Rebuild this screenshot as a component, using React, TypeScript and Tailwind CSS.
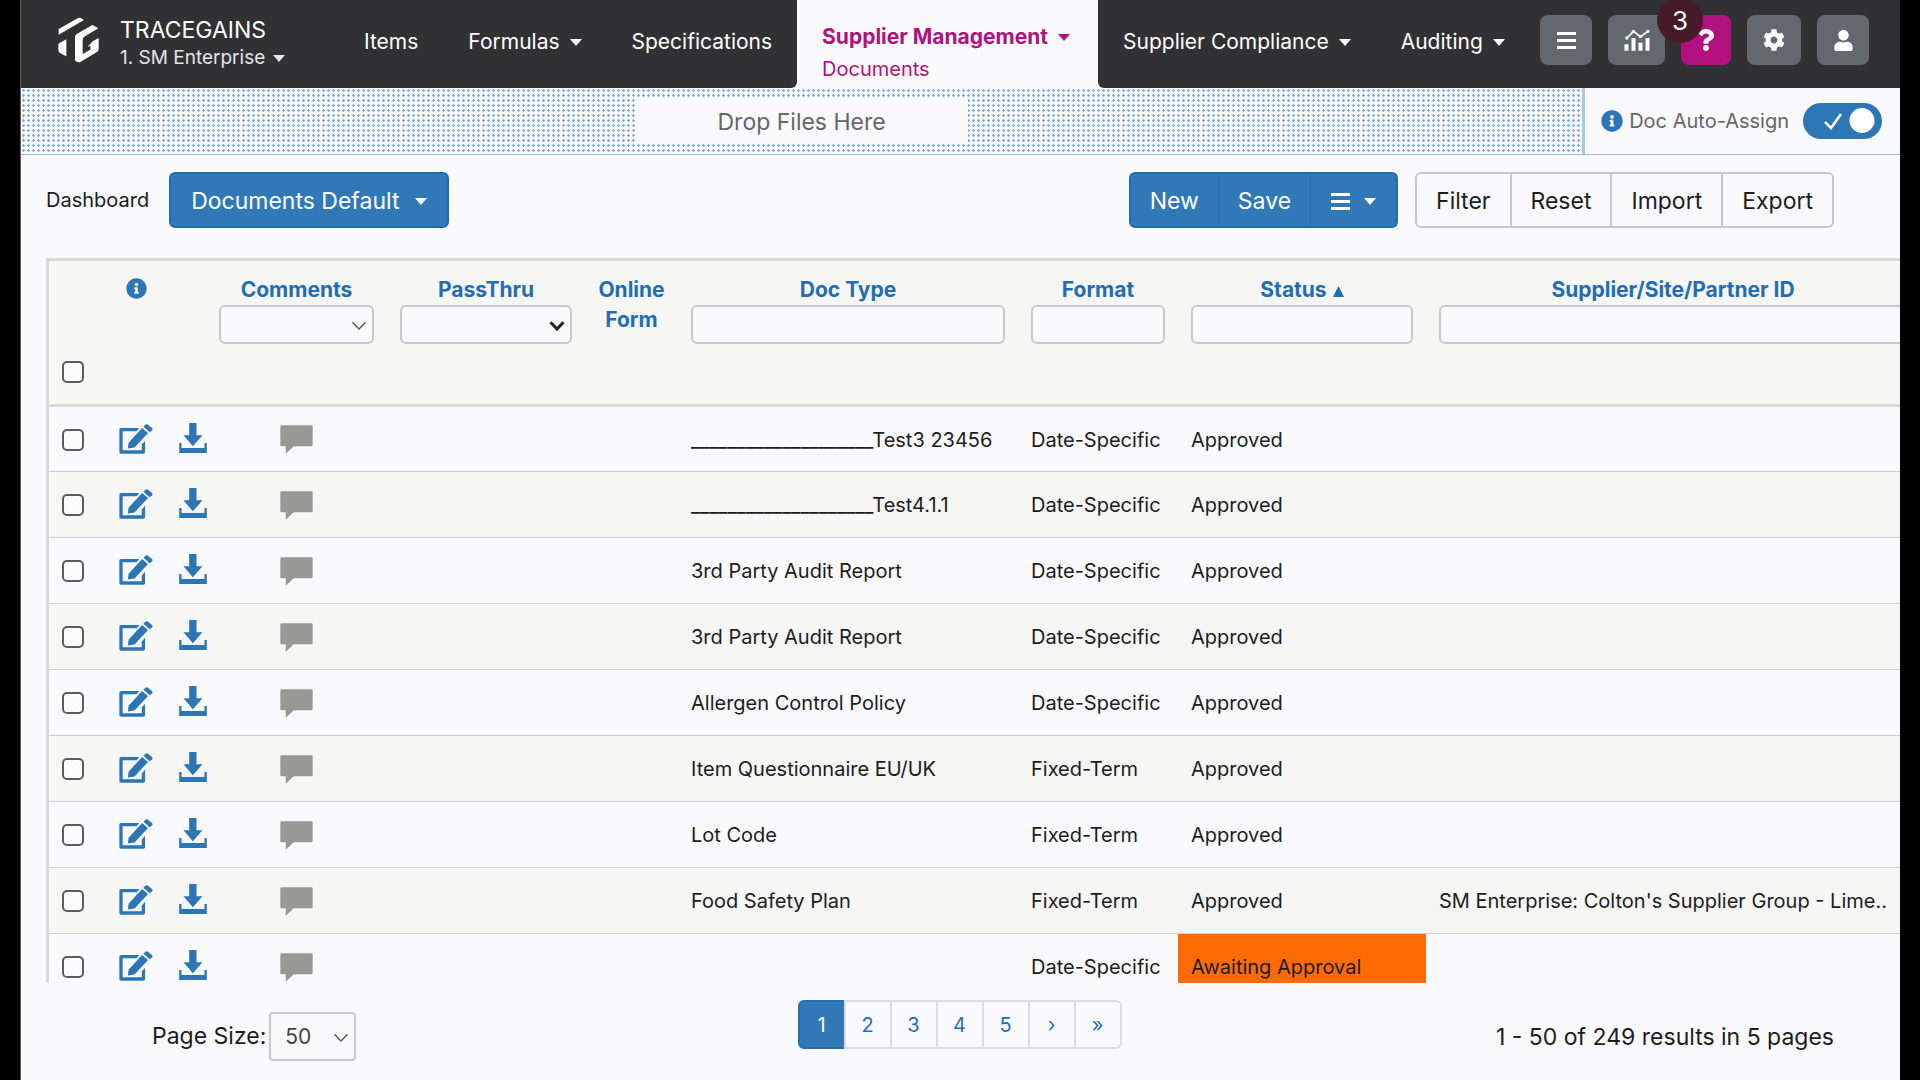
import { useState } from "react";
import clsx from "clsx";
import { FaCog, FaInfoCircle, FaQuestion, FaUser } from "react-icons/fa";

const DOCUMENTS = [
  { id: 1, docType: "____________________Test3 23456", format: "Date-Specific", status: "Approved", supplier: "" },
  { id: 2, docType: "____________________Test4.1.1", format: "Date-Specific", status: "Approved", supplier: "" },
  { id: 3, docType: "3rd Party Audit Report", format: "Date-Specific", status: "Approved", supplier: "" },
  { id: 4, docType: "3rd Party Audit Report", format: "Date-Specific", status: "Approved", supplier: "" },
  { id: 5, docType: "Allergen Control Policy", format: "Date-Specific", status: "Approved", supplier: "" },
  { id: 6, docType: "Item Questionnaire EU/UK", format: "Fixed-Term", status: "Approved", supplier: "" },
  { id: 7, docType: "Lot Code", format: "Fixed-Term", status: "Approved", supplier: "" },
  {
    id: 8,
    docType: "Food Safety Plan",
    format: "Fixed-Term",
    status: "Approved",
    supplier: "SM Enterprise: Colton's Supplier Group - Lime..",
  },
  { id: 9, docType: "", format: "Date-Specific", status: "Awaiting Approval", supplier: "" },
];

const PAGES = ["1", "2", "3", "4", "5", "›", "»"];

function Caret() {
  return (
    <svg viewBox="0 0 12 7" className="w-3 h-[7px] shrink-0 fill-current" aria-hidden="true">
      <path d="M0 0H12L6 7Z" />
    </svg>
  );
}

function Bars() {
  return (
    <svg viewBox="0 0 19 17" className="w-[19px] h-[17px] shrink-0 fill-current" aria-hidden="true">
      <path d="M0 0H19V3H0ZM0 7H19V10H0ZM0 14H19V17H0Z" />
    </svg>
  );
}

function Chevron({ bold }: { bold?: boolean }) {
  return (
    <svg
      viewBox="0 0 16 10"
      className="absolute right-[7px] top-1/2 -mt-1 w-4 h-2.5 pointer-events-none"
      fill="none"
      stroke={bold ? "#222" : "#555"}
      strokeWidth={bold ? 3 : 1.3}
      aria-hidden="true"
    >
      <path d="M1.5 1.2L8 8L14.5 1.2" />
    </svg>
  );
}

function Logo() {
  return (
    <svg viewBox="25 28 123 136" className="w-[41px] h-[46px] shrink-0" fill="#fff" aria-hidden="true">
      <path d="M27 63L84 31Q88 28 93 30L103 36L27 80Z" />
      <path d="M26 110Q27 106 31 104L50 94V145L32 136Q26 133 26 126Z" />
      <path d="M76 87Q76 82 80 79L128 51L146 61L106 85Q99 89 99 96V138L122 125V113L113 118L129 100L147 90V124Q147 128 143 131L92 162Q88 164 84 162L76 158Z" />
    </svg>
  );
}

function ChartIcon() {
  return (
    <svg viewBox="68 64 77 66" className="w-[26px] h-[22px]" fill="#fff" aria-hidden="true">
      <path d="M69 110H81V129H69ZM90 91H102V129H90ZM111 105H123V129H111ZM132 91H144V129H132Z" />
      <path d="M76 91L96 71L117 87L139 71" fill="none" stroke="#fff" strokeWidth="5" />
      <circle cx="76" cy="91" r="5" />
      <circle cx="96" cy="71" r="5" />
      <circle cx="117" cy="87" r="5" />
      <circle cx="139" cy="71" r="5" />
    </svg>
  );
}

function EditIcon() {
  return (
    <svg viewBox="240 71 101 91" className="w-[34px] h-[30px] mx-auto" fill="#2c76b6" aria-hidden="true">
      <path d="M240 88Q240 83 245 83H301L292 93H250V151H308V133L318 122V156Q318 161 313 161H245Q240 161 240 156Z" />
      <path d="M266 145L268 128L309 83L327 98L286 142Z" />
      <path d="M313 79L319 73Q322 71 325 72L339 83Q342 87 340 90L332 96Z" />
    </svg>
  );
}

function DownloadIcon() {
  return (
    <svg viewBox="416 69 83 90" className="w-7 h-[30px]" fill="#2c76b6" aria-hidden="true">
      <path d="M446 69H468V106H486L457 139L429 106H446Z" />
      <path d="M416 129H423V144H492V129H499V159H416Z" />
    </svg>
  );
}

function CommentIcon() {
  return (
    <svg viewBox="722 76 98 86" className="w-[33px] h-[29px] mx-auto" fill="#979794" aria-hidden="true">
      <path d="M727 77H815Q819 77 819 81V135Q819 139 815 139H763L739 161V139H727Q723 139 723 135V81Q723 77 727 77Z" />
    </svg>
  );
}

function NavItem({ label, menu }: { label: string; menu?: boolean }) {
  return (
    <button className="h-[84px] px-[25px] flex items-center gap-2.5 text-[21px] whitespace-nowrap">
      {label}
      {menu && <Caret />}
    </button>
  );
}

function Header() {
  return (
    <header className="flex h-[88px] shrink-0 text-white">
      <div className="flex items-start bg-[#313133] rounded-br-md pl-[37px]">
        <div className="pt-[17px]">
          <Logo />
        </div>
        <div className="pl-[21px] pt-4 w-60">
          <p className="text-[23px] leading-7">TRACEGAINS</p>
          <button className="flex items-center gap-2 text-[19px] leading-7 text-[#e4e4ea]">
            1. SM Enterprise <Caret />
          </button>
        </div>
        <NavItem label="Items" />
        <NavItem label="Formulas" menu />
        <NavItem label="Specifications" />
      </div>
      <div className="pl-[25px] pr-7 pt-[21px] text-[#b0117f]">
        <button className="flex items-center gap-2.5 text-[21px] leading-8 font-bold whitespace-nowrap">
          Supplier Management <Caret />
        </button>
        <a href="#documents" className="block text-[20px] leading-8">
          Documents
        </a>
      </div>
      <div className="flex flex-1 items-start bg-[#313133] rounded-bl-md pr-[31px]">
        <NavItem label="Supplier Compliance" menu />
        <NavItem label="Auditing" menu />
        <div className="ml-auto pt-[15px] flex gap-4 [&>button]:h-[50px] [&>button]:rounded-lg [&>button]:flex [&>button]:items-center [&>button]:justify-center">
          <button aria-label="Menu" className="w-[52px] bg-[#62696e]">
            <Bars />
          </button>
          <button aria-label="Reports" className="w-[57px] bg-[#62696e]">
            <ChartIcon />
          </button>
          <button aria-label="Help" className="relative w-[50px] bg-[#b0117f]">
            <FaQuestion size={22} />
            <span className="absolute -left-6 -top-[18px] size-[46px] rounded-full bg-[#471a29] text-[26px] leading-[48px] text-center">
              3
            </span>
          </button>
          <button aria-label="Settings" className="w-[54px] bg-[#62696e]">
            <FaCog size={22} />
          </button>
          <button aria-label="Account" className="w-[52px] bg-[#62696e]">
            <FaUser size={21} />
          </button>
        </div>
      </div>
    </header>
  );
}

function DropZone() {
  const [autoAssign, setAutoAssign] = useState(true);

  return (
    <div className="flex h-[67px] shrink-0 border-b border-[#8fbfe6] text-[#666]">
      <div className="flex-1 flex items-center justify-center bg-[radial-gradient(circle,#7db0e0_1px,transparent_1.5px)] bg-[length:5px_5px]">
        <div className="w-[332px] h-[46px] bg-[#fafafd] text-[23px] leading-[48px] text-center">Drop Files Here</div>
      </div>
      <div className="flex items-center border-l-[3px] border-[#a9c9ec] pl-4 pr-[18px]">
        <FaInfoCircle size={22} className="text-[#2c76b6]" />
        <label htmlFor="auto-assign" className="pl-1.5 pr-3.5 text-[20px]">
          Doc Auto-Assign
        </label>
        <div className="relative">
          <input
            id="auto-assign"
            type="checkbox"
            checked={autoAssign}
            onChange={(e) => setAutoAssign(e.target.checked)}
            className="block appearance-none w-[79px] h-9 rounded-full bg-[#2e77b6]"
          />
          <svg viewBox="0 0 79 36" className="absolute inset-0 w-[79px] h-9 pointer-events-none" aria-hidden="true">
            <path d="M22 19L28 25L38 11" fill="none" stroke="#fff" strokeWidth="2.5" />
            <circle cx="59" cy="17.5" r="12.5" fill="#fff" />
          </svg>
        </div>
      </div>
    </div>
  );
}

function Toolbar() {
  return (
    <div className="flex items-center shrink-0 pt-[17px] pl-[25px] pr-[66px] pb-[30px] text-[23px]">
      <span className="text-[20px] pr-5">Dashboard</span>
      <button className="h-14 px-5 pt-0.5 flex items-center gap-4 rounded-md border-2 border-[#1f6db1] bg-[#3079b6] text-white whitespace-nowrap">
        Documents Default <Caret />
      </button>
      <div className="ml-auto mr-[17px] flex h-14 rounded-md border-2 border-[#1f6db1] bg-[#3079b6] text-white divide-x divide-[#1f6db1] [&>button]:pt-0.5">
        <button className="px-[19px]">New</button>
        <button className="px-[19px]">Save</button>
        <button aria-label="More actions" className="px-5 flex items-center gap-3.5">
          <Bars />
          <Caret />
        </button>
      </div>
      <div className="flex h-14 rounded-md border-2 border-[#c8c8c8] divide-x-2 divide-[#c8c8c8]">
        {["Filter", "Reset", "Import", "Export"].map((label) => (
          <button key={label} className="px-[19px] pt-0.5">
            {label}
          </button>
        ))}
      </div>
    </div>
  );
}

const TITLE = "block text-[21px] leading-[30px] font-bold text-[#1f6db3] text-center whitespace-nowrap";
const FIELD = "block appearance-none w-full h-[39px] rounded-md border-2 border-[#c9c9c9] bg-[#fafafd] px-2 text-[20px]";
const CHECKBOX = "block appearance-none size-[22px] rounded-[5px] border-2 border-[#5c5c5c] bg-[#fcfcff]";

function TextFilter({ id, label, sorted }: { id: string; label: string; sorted?: boolean }) {
  return (
    <th className="px-[13px]">
      <label htmlFor={id} className={TITLE}>
        {label}
        {sorted && (
          <svg viewBox="0 0 11 11" className="inline ml-1.5 size-[11px] fill-current" aria-hidden="true">
            <path d="M5.5 0L11 11H0Z" />
          </svg>
        )}
      </label>
      <input id={id} type="text" className={FIELD} />
    </th>
  );
}

function SelectFilter({ id, label, bold }: { id: string; label: string; bold?: boolean }) {
  return (
    <th className="px-[13px]">
      <label htmlFor={id} className={TITLE}>
        {label}
      </label>
      <div className="relative">
        <select id={id} className={FIELD}>
          <option value=""></option>
          <option value="yes">Yes</option>
          <option value="no">No</option>
        </select>
        <Chevron bold={bold} />
      </div>
    </th>
  );
}

function DocumentsTable() {
  return (
    <div className="flex-1 min-h-0 ml-[25px] overflow-hidden border-l-[3px] border-t-[3px] border-[#d9d9d8]">
      {/* wider than its box, the last column runs under the right edge */}
      <table className="table-fixed w-[calc(100%+20px)] border-collapse text-[20px] leading-[30px] text-left">
        <colgroup>
          <col className="w-[57px]" />
          <col className="w-[60px]" />
          <col className="w-10" />
          <col className="w-[181px]" />
          <col className="w-[198px]" />
          <col className="w-[93px]" />
          <col className="w-[340px]" />
          <col className="w-[160px]" />
          <col className="w-[248px]" />
          <col />
        </colgroup>
        <thead>
          <tr className="h-[144px] bg-[#f6f6f5] border-b-[3px] border-[#d9d9d8] [&>th]:align-top [&>th]:pt-3.5">
            <th>
              <input type="checkbox" aria-label="Select all" className={clsx(CHECKBOX, "ml-[13px] mt-[86px]")} />
            </th>
            <th>
              <FaInfoCircle size={21} className="mx-auto mt-[3px] text-[#2c76b6]" />
            </th>
            <th></th>
            <SelectFilter id="comments" label="Comments" />
            <SelectFilter id="passthru" label="PassThru" bold />
            <th>
              <span className={TITLE}>Online</span>
              <span className={TITLE}>Form</span>
            </th>
            <TextFilter id="doc-type" label="Doc Type" />
            <TextFilter id="format" label="Format" />
            <TextFilter id="status" label="Status" sorted />
            <TextFilter id="supplier" label="Supplier/Site/Partner ID" />
          </tr>
        </thead>
        <tbody>
          {DOCUMENTS.map((doc) => (
            <tr
              key={doc.id}
              className="h-[66px] border-b border-[#cfcfcf] even:bg-[#f6f6f5] whitespace-nowrap [&>td]:pt-0.5"
            >
              <td className="pl-[13px]">
                <input type="checkbox" aria-label={`Select document ${doc.id}`} className={CHECKBOX} />
              </td>
              <td>
                <button aria-label="Edit" className="block mx-auto -mt-0.5">
                  <EditIcon />
                </button>
              </td>
              <td className="pl-[13px]">
                <button aria-label="Download" className="block -mt-1">
                  <DownloadIcon />
                </button>
              </td>
              <td>
                <button aria-label="Comments" className="block mx-auto">
                  <CommentIcon />
                </button>
              </td>
              <td></td>
              <td></td>
              <td className="px-[13px]">{doc.docType}</td>
              <td className="pl-[13px]">{doc.format}</td>
              <td className={clsx("px-[13px]", doc.status === "Awaiting Approval" && "bg-[#ff6a03]")}>{doc.status}</td>
              <td className="px-[13px] truncate">{doc.supplier}</td>
            </tr>
          ))}
        </tbody>
      </table>
    </div>
  );
}

function Footer() {
  return (
    <footer className="grid grid-cols-[1fr_auto_1fr] items-start h-[97px] shrink-0 pt-[17px]">
      <div className="mt-3 pl-[131px] flex items-center gap-[3px]">
        <label htmlFor="page-size" className="text-[23px]">
          Page Size:
        </label>
        <div className="relative">
          <select
            id="page-size"
            defaultValue="50"
            className="block appearance-none w-[87px] h-[49px] rounded border-2 border-[#c9c9c9] pl-3.5 text-[21px] text-[#444]"
          >
            <option>25</option>
            <option>50</option>
            <option>100</option>
          </select>
          <Chevron />
        </div>
      </div>
      <nav className="flex h-[49px] text-[20px] text-[#1f6db3]">
        {PAGES.map((page, i) => (
          <a
            key={page}
            href={`#page-${page}`}
            className={clsx(
              "w-12 -ml-0.5 flex items-center justify-center border-2 first:rounded-l-md last:rounded-r-md",
              i === 0 ? "bg-[#3079b6] border-[#2470b2] text-white" : "border-[#dcdcdc]"
            )}
          >
            {page}
          </a>
        ))}
      </nav>
      <p className="mt-3 pr-[66px] text-[23px] leading-[50px] text-right">1 - 50 of 249 results in 5 pages</p>
    </footer>
  );
}

export default function App() {
  return (
    <div className="h-screen bg-black pl-5 pr-5 font-[Inter,sans-serif] text-[#1c1c1e]">
      <div className="h-full flex flex-col overflow-hidden bg-[#fafafd] border-l border-[#566450]">
        <Header />
        <DropZone />
        <Toolbar />
        <DocumentsTable />
        <Footer />
      </div>
    </div>
  );
}
